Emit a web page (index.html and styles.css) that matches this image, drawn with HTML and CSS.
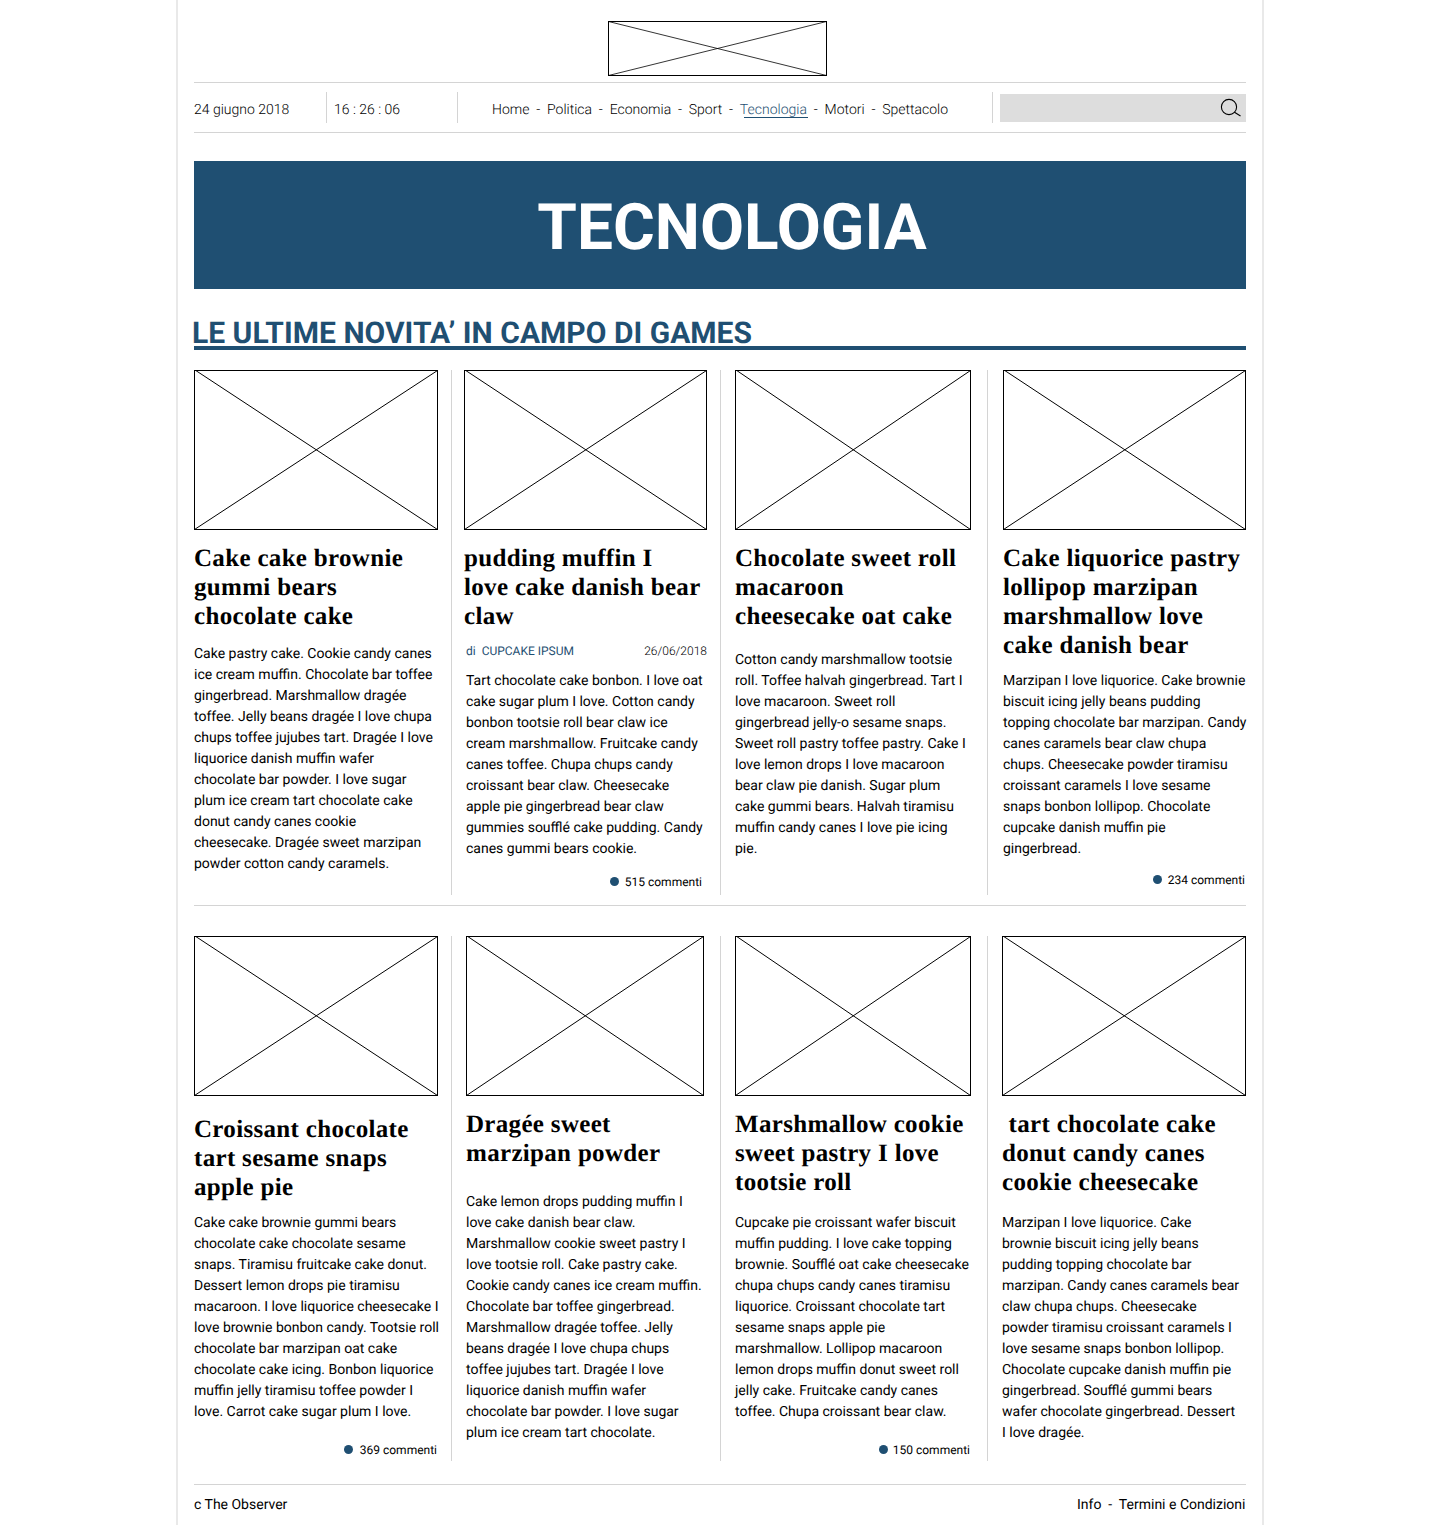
FILE: index.html
```html
<!DOCTYPE html>
<html lang="it">
<head>
<meta charset="utf-8">
<title>The Observer - Tecnologia</title>
<link rel="stylesheet" href="styles.css">
</head>
<body>
<div class="page">
  <header>
    <svg class="placeholder logo" viewBox="0 0 219 55" preserveAspectRatio="none"><rect x=".5" y=".5" width="218" height="54"/><path d="M.5 .5L218.500 54.500M218.500 .5L.5 54.500"/></svg>
    <div class="topbar">
      <div class="date">24 giugno 2018</div>
      <div class="time">16 : 26 : 06</div>
      <nav class="menu">
        <a>Home</a><i>-</i><a>Politica</a><i>-</i><a>Economia</a><i>-</i><a>Sport</a><i>-</i><a class="active">Tecnologia</a><i>-</i><a>Motori</a><i>-</i><a>Spettacolo</a>
      </nav>
      <div class="search">
        <svg width="22" height="20" viewBox="0 0 22 20"><circle cx="9" cy="9" r="7.600"/><path d="M14.500 14.300L20.500 18"/></svg>
      </div>
    </div>
  </header>
  <h1 class="banner"><span>TECNOLOGIA</span></h1>
  <h2 class="section-title"><span>LE ULTIME NOVITA’ IN CAMPO DI GAMES</span></h2>

  <section class="row">
    <article class="card c1">
      <svg class="placeholder" viewBox="0 0 244 160" preserveAspectRatio="none"><rect x=".5" y=".5" width="243" height="159"/><path d="M1 0L243.500 159.500M243.500 .5L.5 159.500"/></svg>
      <h3>Cake cake brownie<br>gummi bears<br>chocolate cake</h3>
      <p>Cake pastry cake. Cookie candy canes<br>ice cream muffin. Chocolate bar toffee<br>gingerbread. Marshmallow dragée<br>toffee. Jelly beans dragée I love chupa<br>chups toffee jujubes tart. Dragée I love<br>liquorice danish muffin wafer<br>chocolate bar powder. I love sugar<br>plum ice cream tart chocolate cake<br>donut candy canes cookie<br>cheesecake. Dragée sweet marzipan<br>powder cotton candy caramels.</p>
    </article>
    <article class="card c2">
      <svg class="placeholder" viewBox="0 0 243 160" preserveAspectRatio="none"><rect x=".5" y=".5" width="242" height="159"/><path d="M1 0L242.500 159.500M242.500 .5L.5 159.500"/></svg>
      <h3>pudding muffin I<br>love cake danish bear<br>claw</h3>
      <div class="byline"><span class="author">di&nbsp; CUPCAKE IPSUM</span><time>26/06/2018</time></div>
      <p>Tart chocolate cake bonbon. I love oat<br>cake sugar plum I love. Cotton candy<br>bonbon tootsie roll bear claw ice<br>cream marshmallow. Fruitcake candy<br>canes toffee. Chupa chups candy<br>croissant bear claw. Cheesecake<br>apple pie gingerbread bear claw<br>gummies soufflé cake pudding. Candy<br>canes gummi bears cookie.</p>
      <div class="comments">515 commenti</div>
    </article>
    <article class="card c3">
      <svg class="placeholder" viewBox="0 0 236 160" preserveAspectRatio="none"><rect x=".5" y=".5" width="235" height="159"/><path d="M1 0L235.500 159.500M235.500 .5L.5 159.500"/></svg>
      <h3>Chocolate sweet roll<br>macaroon<br>cheesecake oat cake</h3>
      <p>Cotton candy marshmallow tootsie<br>roll. Toffee halvah gingerbread. Tart I<br>love macaroon. Sweet roll<br>gingerbread jelly-o sesame snaps.<br>Sweet roll pastry toffee pastry. Cake I<br>love lemon drops I love macaroon<br>bear claw pie danish. Sugar plum<br>cake gummi bears. Halvah tiramisu<br>muffin candy canes I love pie icing<br>pie.</p>
    </article>
    <article class="card c4">
      <svg class="placeholder" viewBox="0 0 243 160" preserveAspectRatio="none"><rect x=".5" y=".5" width="242" height="159"/><path d="M1 0L242.500 159.500M242.500 .5L.5 159.500"/></svg>
      <h3>Cake liquorice pastry<br>lollipop marzipan<br>marshmallow love<br>cake danish bear</h3>
      <p>Marzipan I love liquorice. Cake brownie<br>biscuit icing jelly beans pudding<br>topping chocolate bar marzipan. Candy<br>canes caramels bear claw chupa<br>chups. Cheesecake powder tiramisu<br>croissant caramels I love sesame<br>snaps bonbon lollipop. Chocolate<br>cupcake danish muffin pie<br>gingerbread.</p>
      <div class="comments">234 commenti</div>
    </article>
  </section>

  <section class="row second">
    <article class="card c5">
      <svg class="placeholder" viewBox="0 0 244 160" preserveAspectRatio="none"><rect x=".5" y=".5" width="243" height="159"/><path d="M1 0L243.500 159.500M243.500 .5L.5 159.500"/></svg>
      <h3>Croissant chocolate<br>tart sesame snaps<br>apple pie</h3>
      <p>Cake cake brownie gummi bears<br>chocolate cake chocolate sesame<br>snaps. Tiramisu fruitcake cake donut.<br>Dessert lemon drops pie tiramisu<br>macaroon. I love liquorice cheesecake I<br>love brownie bonbon candy. Tootsie roll<br>chocolate bar marzipan oat cake<br>chocolate cake icing. Bonbon liquorice<br>muffin jelly tiramisu toffee powder I<br>love. Carrot cake sugar plum I love.</p>
      <div class="comments">369 commenti</div>
    </article>
    <article class="card c6">
      <svg class="placeholder" viewBox="0 0 238 160" preserveAspectRatio="none"><rect x=".5" y=".5" width="237" height="159"/><path d="M1 0L237.500 159.500M237.500 .5L.5 159.500"/></svg>
      <h3>Dragée sweet<br>marzipan powder</h3>
      <p>Cake lemon drops pudding muffin I<br>love cake danish bear claw.<br>Marshmallow cookie sweet pastry I<br>love tootsie roll. Cake pastry cake.<br>Cookie candy canes ice cream muffin.<br>Chocolate bar toffee gingerbread.<br>Marshmallow dragée toffee. Jelly<br>beans dragée I love chupa chups<br>toffee jujubes tart. Dragée I love<br>liquorice danish muffin wafer<br>chocolate bar powder. I love sugar<br>plum ice cream tart chocolate.</p>
    </article>
    <article class="card c7">
      <svg class="placeholder" viewBox="0 0 236 160" preserveAspectRatio="none"><rect x=".5" y=".5" width="235" height="159"/><path d="M1 0L235.500 159.500M235.500 .5L.5 159.500"/></svg>
      <h3>Marshmallow cookie<br>sweet pastry I love<br>tootsie roll</h3>
      <p>Cupcake pie croissant wafer biscuit<br>muffin pudding. I love cake topping<br>brownie. Soufflé oat cake cheesecake<br>chupa chups candy canes tiramisu<br>liquorice. Croissant chocolate tart<br>sesame snaps apple pie<br>marshmallow. Lollipop macaroon<br>lemon drops muffin donut sweet roll<br>jelly cake. Fruitcake candy canes<br>toffee. Chupa croissant bear claw.</p>
      <div class="comments">150 commenti</div>
    </article>
    <article class="card c8">
      <svg class="placeholder" viewBox="0 0 244 160" preserveAspectRatio="none"><rect x=".5" y=".5" width="243" height="159"/><path d="M1 0L243.500 159.500M243.500 .5L.5 159.500"/></svg>
      <h3>&nbsp;tart chocolate cake<br>donut candy canes<br>cookie cheesecake</h3>
      <p>Marzipan I love liquorice. Cake<br>brownie biscuit icing jelly beans<br>pudding topping chocolate bar<br>marzipan. Candy canes caramels bear<br>claw chupa chups. Cheesecake<br>powder tiramisu croissant caramels I<br>love sesame snaps bonbon lollipop.<br>Chocolate cupcake danish muffin pie<br>gingerbread. Soufflé gummi bears<br>wafer chocolate gingerbread. Dessert<br>I love dragée.</p>
    </article>
  </section>

  <footer><span>c The Observer</span><span>Info&nbsp; -&nbsp; Termini e Condizioni</span></footer>
</div>
</body>
</html>
```
FILE: styles.css
```css
* { box-sizing: border-box; }
body { margin: 0; background: #fff; color: #000; font: 14px/21px Roboto, sans-serif; text-rendering: geometricPrecision; }
h1, h2, h3, p { margin: 0; }

.page {
  width: 1088px; height: 1525px; margin: 0 auto; padding: 21px 16px 0;
  border: solid #e9e9e9; border-width: 0 2px;
}

.placeholder { display: block; fill: none; stroke: #000; stroke-width: 1; flex: none; }
.logo { width: 219px; height: 55px; margin-left: 414px; }
.logo path { stroke-width: .8; }

.topbar {
  display: grid; grid-template-columns: 133px 131px 535px 253px;
  height: 51px; margin-top: 6px; padding: 9px 0;
  border: solid #d4d4d4; border-width: 1px 0;
  font-weight: 300; line-height: 37px;
}
.date, .time, .menu { height: 31px; border-right: 1px solid #d4d4d4; white-space: nowrap; }
.time { padding-left: 7px; }
.menu { display: flex; padding-left: 34px; }
.menu i { width: 17.600px; text-align: center; font-style: normal; }
.menu .active { position: relative; color: #1f4f72; }
.menu .active::after {
  content: ""; position: absolute; left: 4px; right: -1px; top: 25px;
  height: 1px; background: #1f4f72;
}
.search {
  display: flex; align-items: center; justify-content: flex-end;
  height: 28px; margin: 2px 0 0 7px; padding-right: 4px; background: #ddd;
}
.search svg { fill: none; stroke: #000; stroke-width: 1.100; }

.banner {
  height: 128px; margin-top: 28px; padding-left: 24px; background: #1f4f72;
  color: #fff; font-size: 64px; font-weight: 700; line-height: 134px; text-align: center;
}
.section-title {
  height: 61px; padding: 27px 0 0; border-bottom: 4px solid #1f4f72;
  color: #1f4f72; font-size: 30px; font-weight: 700; line-height: 36px;
  letter-spacing: .02px; text-indent: -2px; white-space: nowrap;
}
.section-title span { display: block; margin-bottom: -6px; }

.row { display: grid; grid-template-columns: 258px 269px 267px 258px; height: 525px; margin-top: 20px; }
.second { position: relative; margin-top: 41px; }
.second::before {
  content: ""; position: absolute; left: 0; right: 0; top: -31px; height: 1px; background: #d4d4d4;
}
.card { display: flex; flex-direction: column; border-right: 1px solid #d4d4d4; white-space: nowrap; }
.card:last-child { border-right: 0; }
.card .placeholder { height: 160px; }
.card h3 {
  margin-top: 14px; padding-bottom: 1px;
  font: 700 25px/29px "Liberation Serif", serif; letter-spacing: .32px;
}
.card p { margin-top: 12px; }

.c1 .placeholder, .c5 .placeholder, .c8 .placeholder { width: 244px; }
.c2 .placeholder, .c4 .placeholder { width: 243px; }
.c3 .placeholder, .c7 .placeholder { width: 236px; }
.c6 .placeholder { width: 238px; }
.c2 { padding-left: 12px; }
.c3, .c7 { padding-left: 14px; }
.c4 { padding-left: 15px; }
.c6, .c8 { padding-left: 14px; }
.c2 p { margin: 10px 0 0 2px; }
.c3 p { margin-top: 18px; }
.c4 p { margin-top: 10px; }
.c5 h3 { margin-top: 19px; }
.c5 p { margin-top: 10px; }
.c6 p { margin-top: 23px; }
.c7 p, .c8 p { margin-top: 15px; }

.byline {
  display: flex; justify-content: space-between; width: 243px; margin-top: 9px;
  padding-left: 2px; font-size: 12px; line-height: 20px;
}
.author { color: #1f4f72; }
.byline time { font-weight: 300; }

.comments {
  display: flex; align-items: center; justify-content: flex-end;
  margin: auto 0 1px; font-size: 12px; line-height: 20px;
}
.comments::before {
  content: ""; width: 9px; height: 9px; margin: 0 6px 1px 0; border-radius: 50%; background: #1f4f72;
}
.c2 .comments { padding-right: 18px; margin-bottom: 3px; }
.c4 .comments { padding-right: 1px; margin-bottom: 5px; }
.c5 .comments { padding-right: 14px; }
.c5 .comments::before { margin-right: 7px; }
.c7 .comments { padding-right: 17px; }
.c7 .comments::before { margin-right: 5px; }

footer {
  display: flex; justify-content: space-between; margin-top: 23px; padding: 10px .5px 0 0;
  border-top: 1px solid #d4d4d4;
}
```
